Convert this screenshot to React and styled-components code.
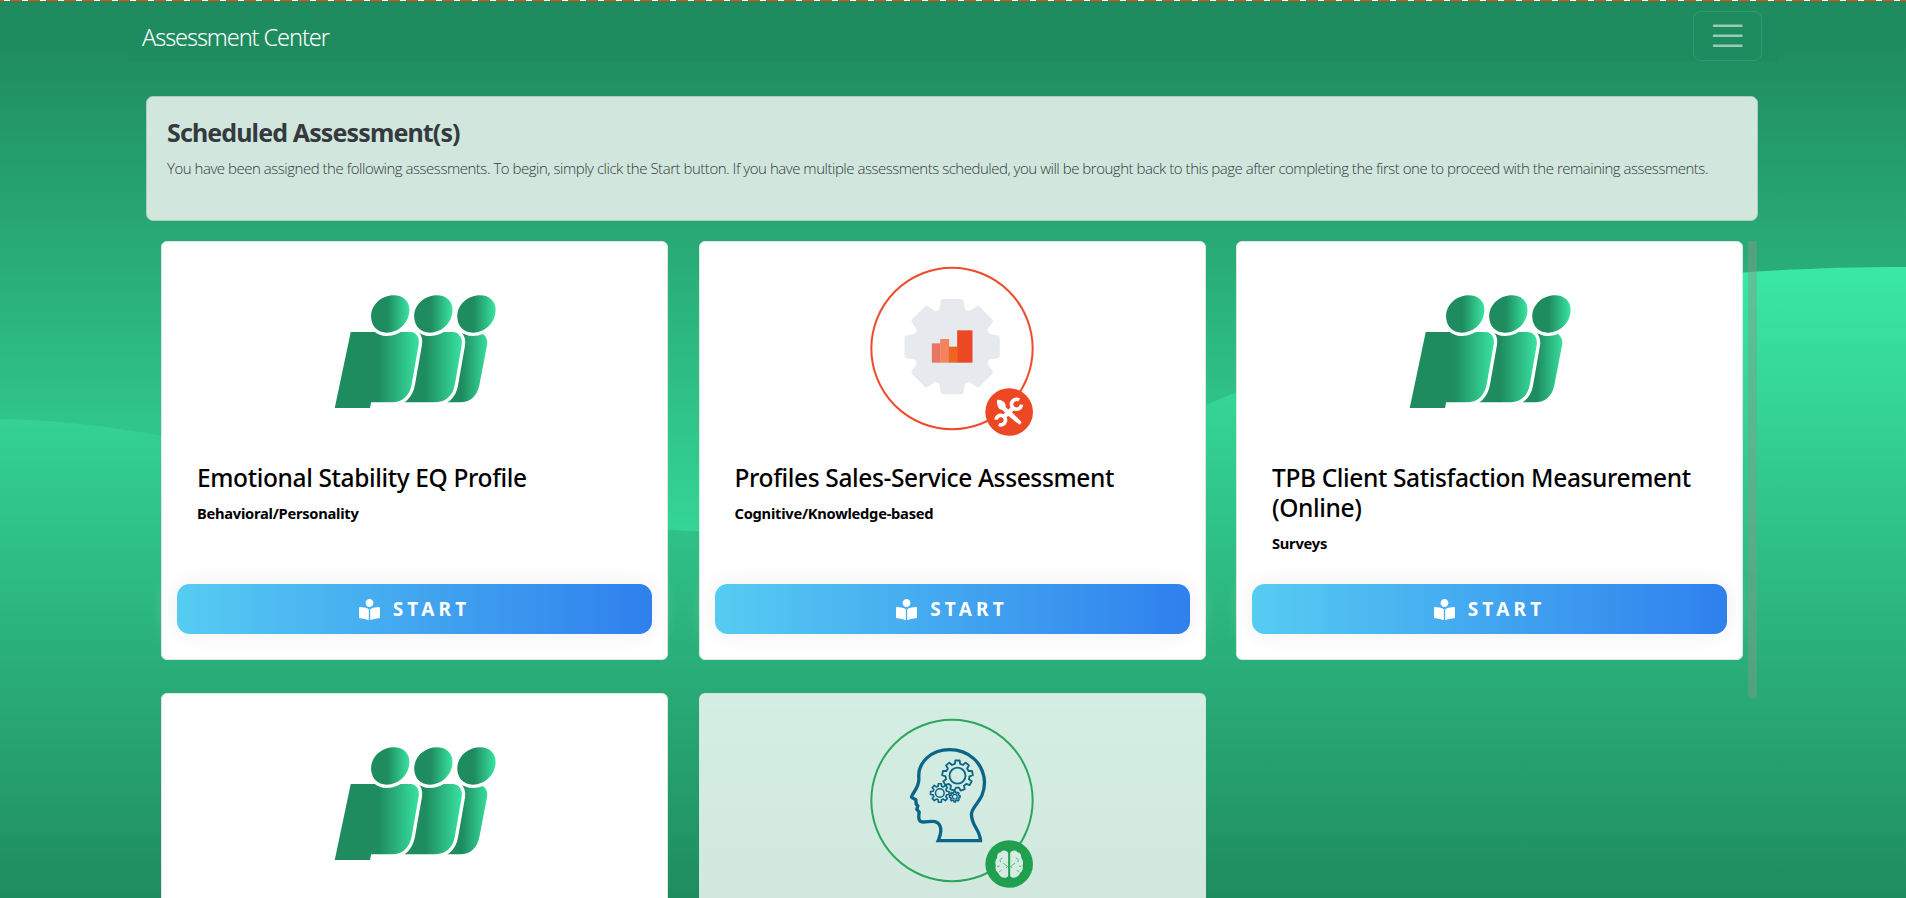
import React from "react";
import styled, { createGlobalStyle } from "styled-components";
import { FaBookReader } from "react-icons/fa";

const GlobalStyle = createGlobalStyle`
  *, *::before, *::after { box-sizing: border-box; }
  body {
    margin: 0;
    height: 100vh;
    overflow: hidden;
    font-family: "Noto Sans", "Open Sans", sans-serif;
    background: #1f8c5f;
  }
`;

const Page = styled.div`
  position: relative;
  isolation: isolate;
  width: 100%;
  height: 100vh;
  overflow: hidden;
`;

const Backdrop = styled.svg`
  position: absolute;
  inset: 0;
  z-index: -1;
  width: 100%;
  height: 100%;
`;

const DashLine = styled.div`
  height: 1px;
  background: repeating-linear-gradient(
    90deg,
    #ff4500 0 4px,
    #fff 4px 10px,
    #ff4500 10px 18px
  );
`;

const Navbar = styled.nav`
  width: 1650px;
  height: 60px;
  margin: 0 auto;
  padding: 0 16px 0 14px;
  display: flex;
  align-items: flex-start;
  justify-content: space-between;
  background: #1f8c5f;
`;

const Brand = styled.a`
  margin-top: 18px;
  color: #fff;
  font-size: 23.5px;
  font-weight: 300;
  letter-spacing: -1.08px;
  line-height: 36px;
  white-space: nowrap;
`;

const Toggler = styled.button`
  width: 69px;
  height: 50px;
  margin: 10px 0 0;
  padding: 5px 15px;
  border: 1px solid rgba(255, 255, 255, 0.1);
  border-radius: 8px;
  background: transparent;
  line-height: 0;
`;

const TogglerIcon = styled.svg`
  width: 37.5px;
  height: 37.5px;
  stroke: rgba(255, 255, 255, 0.55);
  stroke-width: 2;
  stroke-linecap: round;
`;

const Main = styled.main`
  width: 1614px;
  margin: 35px auto 0;
  padding-right: 2px;
`;

const Notice = styled.section`
  height: 125px;
  padding: 18px 20px;
  border: 1px solid #a9cfba;
  border-radius: 7px;
  background: #d1e7dd;
  color: #343a40;
`;

const NoticeTitle = styled.h1`
  margin: 0;
  font-size: 25px;
  font-weight: 700;
  letter-spacing: -0.88px;
  line-height: 34px;
`;

const NoticeText = styled.p`
  margin: 7px 0 0;
  font-family: "Open Sans", sans-serif;
  font-size: 15px;
  font-weight: 300;
  letter-spacing: -0.474px;
  line-height: 24px;
  white-space: nowrap;
`;

const ListRow = styled.div`
  display: flex;
  margin-top: 20px;
  justify-content: space-between;
  align-items: flex-start;
  padding: 0 1px 0 15px;
`;

const CardGrid = styled.div`
  display: grid;
  grid-template-columns: repeat(3, 507px);
  column-gap: 30.5px;
  row-gap: 33px;
`;

const ScrollThumb = styled.div`
  width: 9px;
  height: 458px;
  border-radius: 0 0 5px 5px;
  background: rgba(136, 150, 138, 0.45);
`;

const Card = styled.article`
  height: 419px;
  display: flex;
  flex-direction: column;
  padding: 8px 15px 25px;
  border: 1px solid ${(p) => (p.$faded ? "rgba(205, 228, 217, 0.9)" : "#dfe6e3")};
  border-radius: 6px;
  background: ${(p) => (p.$faded ? "rgba(255, 255, 255, 0.8)" : "#fff")};
`;

const Picture = styled.svg`
  width: 210px;
  height: 200px;
  flex: none;
  align-self: center;
`;

const CardBody = styled.div`
  flex: 1;
  padding: 13px 20px 0;
`;

const CardTitle = styled.h2`
  margin: 0 -10px 0 0;
  font-size: 24.5px;
  font-weight: 500;
  letter-spacing: -0.37px;
  line-height: 30px;
  color: #000;
`;

const CardKind = styled.p`
  margin: 8px 0 0;
  font-size: 14.7px;
  font-weight: 700;
  letter-spacing: -0.26px;
  line-height: 24px;
  color: #000;
`;

const StartButton = styled.button`
  height: 50px;
  padding: 0;
  display: flex;
  align-items: center;
  justify-content: center;
  gap: 13px;
  border: 0;
  border-radius: 12.5px;
  background: linear-gradient(to right, #56ccf2, #2f80ed);
  box-shadow: 0 0 25px #eee;
  color: #fff;
  font-family: inherit;
  font-size: 19px;
  font-weight: 700;
  letter-spacing: 4.2px;

  svg {
    width: 21px;
    height: 21px;
  }
`;

function gearPath(cx, cy, outer, inner, teeth) {
  const pts = [];
  const step = (Math.PI * 2) / teeth;
  for (let i = 0; i < teeth; i++) {
    const a = i * step - Math.PI / 2;
    [
      [inner, -0.32],
      [outer, -0.2],
      [outer, 0.2],
      [inner, 0.32],
    ].forEach(([r, k]) => {
      pts.push(
        `${(cx + r * Math.cos(a + k * step)).toFixed(1)},${(cy + r * Math.sin(a + k * step)).toFixed(1)}`
      );
    });
  }
  return `M${pts.join("L")}Z`;
}

function PeopleLogo({ id }) {
  const grad = (n, from, to) => (
    <linearGradient id={`${id}${n}`} gradientUnits="userSpaceOnUse" x1={from} x2={to} y1="0" y2="0">
      <stop offset="0" stopColor="#1f8c5f" />
      <stop offset="1" stopColor="#3ae8a4" />
    </linearGradient>
  );
  const body = "M121 186H300C318 187 328 202 325 222L304 342C298 378 275 397 245 397H182L179 414H73Z";
  const middle = "M323 186H428C448 188 457 205 454 225L433 345C427 380 403 397 372 397H281L240 380Z";
  const last = "M453 189C480 196 495 194 514 190C527 198 533 210 530 225L507 345C500 380 478 397 450 397H411L400 300Z";
  return (
    <Picture viewBox="-1.2 -60 630 600" aria-hidden="true">
      <defs>
        {grad("body", 205, 335)}
        {grad("middle", 345, 462)}
        {grad("last", 455, 540)}
        {grad("head", 232, 300)}
      </defs>
      <path d={last} fill={`url(#${id}last)`} />
      <path d={middle} fill={`url(#${id}middle)`} stroke="#fff" strokeWidth="20" paintOrder="stroke" />
      <path d={body} fill={`url(#${id}body)`} stroke="#fff" strokeWidth="20" paintOrder="stroke" />
      {[0, 129.3, 258.6].map((x) => (
        <path
          key={x}
          d="M182 141C181 104 214 76 250 76C279 76 298 95 297 121C296 158 266 188 229 188C201 188 183 168 182 141Z"
          transform={`translate(${x} 0)`}
          fill={`url(#${id}head)`}
          stroke="#fff"
          strokeWidth="20"
          paintOrder="stroke"
        />
      ))}
    </Picture>
  );
}

function SalesLogo() {
  return (
    <Picture viewBox="-9.5 0 630 600" aria-hidden="true">
      <circle cx="305.5" cy="295.5" r="242" fill="none" stroke="#ef4b2a" strokeWidth="6" />
      <g fill="#e6eaee" stroke="#e6eaee" strokeWidth="14" strokeLinejoin="round" transform="translate(306 290)">
        <circle r="110" />
        {[0, 45, 90, 135, 180, 225, 270, 315].map((a) => (
          <path key={a} d="M-27 -136H27L34 -100H-34Z" transform={`rotate(${a})`} />
        ))}
      </g>
      <path fill="#e97663" d="M245 280h26v58h-26z" />
      <path fill="#f4845b" d="M270 267h27v71h-27z" />
      <path fill="#ee6522" d="M296 290h26v48h-26z" />
      <path fill="#ee4723" d="M321 241h46v97h-46z" />
      <circle cx="477" cy="486" r="71.5" fill="#ee4723" />
      <path fill="#fff" d="M441 449C453 449 465 455 466 464L467 472L476 481L466 490L457 480L450 478C443 474 439 460 441 449Z" />
      <path d="M462 500L490 473" stroke="#fff" strokeWidth="13" fill="none" />
      <path fill="#fff" d="M484 485L514 516L510 524L500 518L472 496Z" />
      <path
        d="M507 451A15 15 0 1 0 514 465M438 510A14 14 0 1 1 446 524"
        transform="translate(0 -1)"
        fill="none"
        stroke="#fff"
        strokeWidth="11"
      />
    </Picture>
  );
}

function MindLogo() {
  return (
    <Picture viewBox="-9.5 6 630 600" aria-hidden="true">
      <circle cx="305.5" cy="301.5" r="242" fill="none" stroke="#2aa75c" strokeWidth="6" />
      <path
        d="M264 422H391C390 388 362 377 364 340C370 312 403 300 403 247C401 188 354 149 298 149C242 149 202 188 206 235C208 262 187 278 184 291C187 297 195 296 197 299L198 312L203 318L200 328L207 336C205 352 204 366 218 366C236 367 260 356 269 377C277 395 269 410 264 422Z"
        fill="none"
        stroke="#0a6588"
        strokeWidth="10"
      />
      <g fill="none" stroke="#0a6588" strokeWidth="5.5" strokeLinejoin="round">
        <path d={gearPath(322, 227, 46, 36, 9)} />
        <circle cx="322" cy="227" r="24" />
        <path d={gearPath(269, 279, 28, 21, 8)} strokeWidth="5" />
        <circle cx="269" cy="279" r="13" strokeWidth="4.5" />
        <path d={gearPath(314, 290, 16, 12, 8)} strokeWidth="4.5" />
        <circle cx="314" cy="290" r="7" strokeWidth="3.5" />
      </g>
      <circle cx="477" cy="492" r="71.5" fill="#209f4f" />
      <path
        fill="#d5ece2"
        d="M474 459C470 449 456 449 452 457C443 458 440 466 441 473C435 480 434 490 437 497C434 506 438 515 444 518C447 528 457 534 465 533C470 533 474 530 474 526ZM480 459C484 449 498 449 502 457C511 458 514 466 513 473C519 480 520 490 517 497C520 506 516 515 510 518C507 528 497 534 489 533C484 533 480 530 480 526Z"
      />
      <path
        d="M451 487Q447 477 457 474M503 487Q507 477 497 474M441 500L448 498M513 500L506 498M447 515L454 511M507 515L500 511M459 489L474 501M480 501L495 489M469 501V504M485 501V504"
        fill="none"
        stroke="#209f4f"
        strokeWidth="2"
      />
    </Picture>
  );
}

const assessments = [
  { id: "eq", logo: "people", title: "Emotional Stability EQ Profile", kind: "Behavioral/Personality" },
  { id: "sales", logo: "sales", title: "Profiles Sales-Service Assessment", kind: "Cognitive/Knowledge-based" },
  { id: "tpb", logo: "people", title: "TPB Client Satisfaction Measurement (Online)", kind: "Surveys" },
  { id: "next", logo: "people" },
  { id: "mind", logo: "mind", faded: true },
];

const logos = { people: PeopleLogo, sales: SalesLogo, mind: MindLogo };

function AssessmentCard({ item }) {
  const Logo = logos[item.logo];
  return (
    <Card $faded={item.faded}>
      <Logo id={item.id} />
      {item.title && (
        <>
          <CardBody>
            <CardTitle>{item.title}</CardTitle>
            <CardKind>{item.kind}</CardKind>
          </CardBody>
          <StartButton>
            <FaBookReader />
            START
          </StartButton>
        </>
      )}
    </Card>
  );
}

export default function App() {
  return (
    <Page>
      <GlobalStyle />
      <Backdrop viewBox="0 0 1906 898" preserveAspectRatio="none" aria-hidden="true">
        <defs>
          <linearGradient id="sky" gradientUnits="userSpaceOnUse" x1="0" x2="0" y1="45" y2="655">
            <stop offset="0" stopColor="#1f8c5f" />
            <stop offset="1" stopColor="#3ae8a4" />
          </linearGradient>
          <linearGradient id="wave" gradientUnits="userSpaceOnUse" x1="0" x2="0" y1="898" y2="267">
            <stop offset="0" stopColor="#1f8c5f" />
            <stop offset="1" stopColor="#3ae8a4" />
          </linearGradient>
        </defs>
        <rect width="1906" height="898" fill="url(#sky)" />
        <path
          d="M0 419C220 422 420 518 690 531C900 539 1050 474 1221 398.5C1380 335 1560 267 1906 267V898H0Z"
          fill="url(#wave)"
        />
      </Backdrop>
      <DashLine />
      <Navbar>
        <Brand>Assessment Center</Brand>
        <Toggler aria-label="Menu">
          <TogglerIcon viewBox="0 0 30 30">
            <path d="M4 7h22M4 15h22M4 23h22" />
          </TogglerIcon>
        </Toggler>
      </Navbar>
      <Main>
        <Notice>
          <NoticeTitle>Scheduled Assessment(s)</NoticeTitle>
          <NoticeText>
            You have been assigned the following assessments. To begin, simply click the Start button. If you
            have multiple assessments scheduled, you will be brought back to this page after completing the
            first one to proceed with the remaining assessments.
          </NoticeText>
        </Notice>
        <ListRow>
          <CardGrid>
            {assessments.map((item) => (
              <AssessmentCard key={item.id} item={item} />
            ))}
          </CardGrid>
          <ScrollThumb />
        </ListRow>
      </Main>
    </Page>
  );
}
